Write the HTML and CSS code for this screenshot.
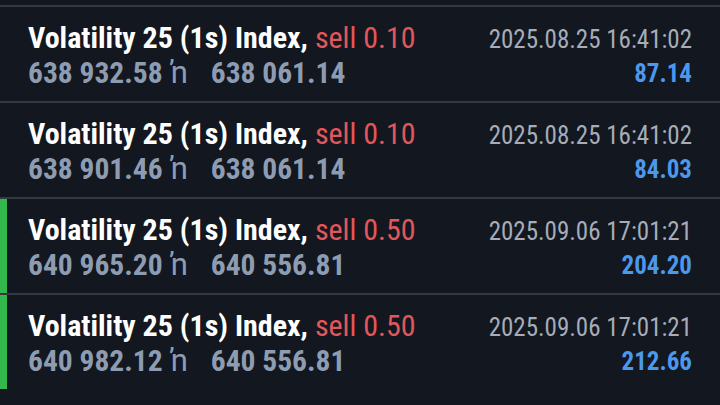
FILE: index.html
```html
<!DOCTYPE html>
<html lang="en">
<head>
    <meta charset="UTF-8">
    <meta name="viewport" content="width=device-width, initial-scale=1.0">
    <title>History</title>
    <link rel="stylesheet" href="styles.css">
</head>
<body>
    <div class="list">
        <!-- linha de ordem -->
        <div class="row">
            <div class="left">
                <div class="title">Volatility 25 (1s) Index, <span class="sell">sell 0.10</span></div>
                <div class="prices">638 932.58<span class="arrow">&#329;</span>638 061.14</div>
            </div>
            <div class="right">
                <div class="date">2025.08.25 16:41:02</div>
                <div class="profit">87.14</div>
            </div>
        </div>
        <div class="row">
            <div class="left">
                <div class="title">Volatility 25 (1s) Index, <span class="sell">sell 0.10</span></div>
                <div class="prices">638 901.46<span class="arrow">&#329;</span>638 061.14</div>
            </div>
            <div class="right">
                <div class="date">2025.08.25 16:41:02</div>
                <div class="profit">84.03</div>
            </div>
        </div>
        <div class="row marked">
            <div class="left">
                <div class="title">Volatility 25 (1s) Index, <span class="sell">sell 0.50</span></div>
                <div class="prices">640 965.20<span class="arrow">&#329;</span>640 556.81</div>
            </div>
            <div class="right">
                <div class="date">2025.09.06 17:01:21</div>
                <div class="profit">204.20</div>
            </div>
        </div>
        <div class="row marked">
            <div class="left">
                <div class="title">Volatility 25 (1s) Index, <span class="sell">sell 0.50</span></div>
                <div class="prices">640 982.12<span class="arrow">&#329;</span>640 556.81</div>
            </div>
            <div class="right">
                <div class="date">2025.09.06 17:01:21</div>
                <div class="profit">212.66</div>
            </div>
        </div>
    </div>
</body>
</html>
```

FILE: styles.css
```css
* {
    margin: 0;
    padding: 0;
    box-sizing: border-box;
}

body {
    background-color: #121720;
    font-family: "Roboto Condensed", Roboto, "Liberation Sans", sans-serif;
    overflow: hidden;
}

.list {
    padding-top: 5px;
}

.row {
    display: flex;
    justify-content: space-between;
    height: 96px;
    border-top: 2px solid #333944;
    padding: 0 28px 0 28px;
}

.row.marked {
    box-shadow: inset 7px 0 0 #33b84d;
}

.title {
    color: #ffffff;
    font-weight: bold;
    font-size: 30px;
    line-height: 36px;
    margin-top: 13px;
    white-space: nowrap;
}

.sell {
    color: #e2575a;
    font-weight: normal;
}

.prices {
    color: #8e9cb1;
    font-weight: bold;
    font-size: 29.5px;
    line-height: 34px;
    white-space: nowrap;
}

.arrow {
    font-family: Roboto, sans-serif;
    font-weight: normal;
    font-size: 31px;
    margin-left: 8px;
    margin-right: 23px;
}

.right {
    text-align: right;
}

.date {
    color: #a6adb8;
    font-size: 25px;
    line-height: 34px;
    margin-top: 16px;
    white-space: nowrap;
}

.profit {
    color: #4b98ec;
    font-weight: bold;
    font-size: 25px;
    line-height: 34px;
}
```
